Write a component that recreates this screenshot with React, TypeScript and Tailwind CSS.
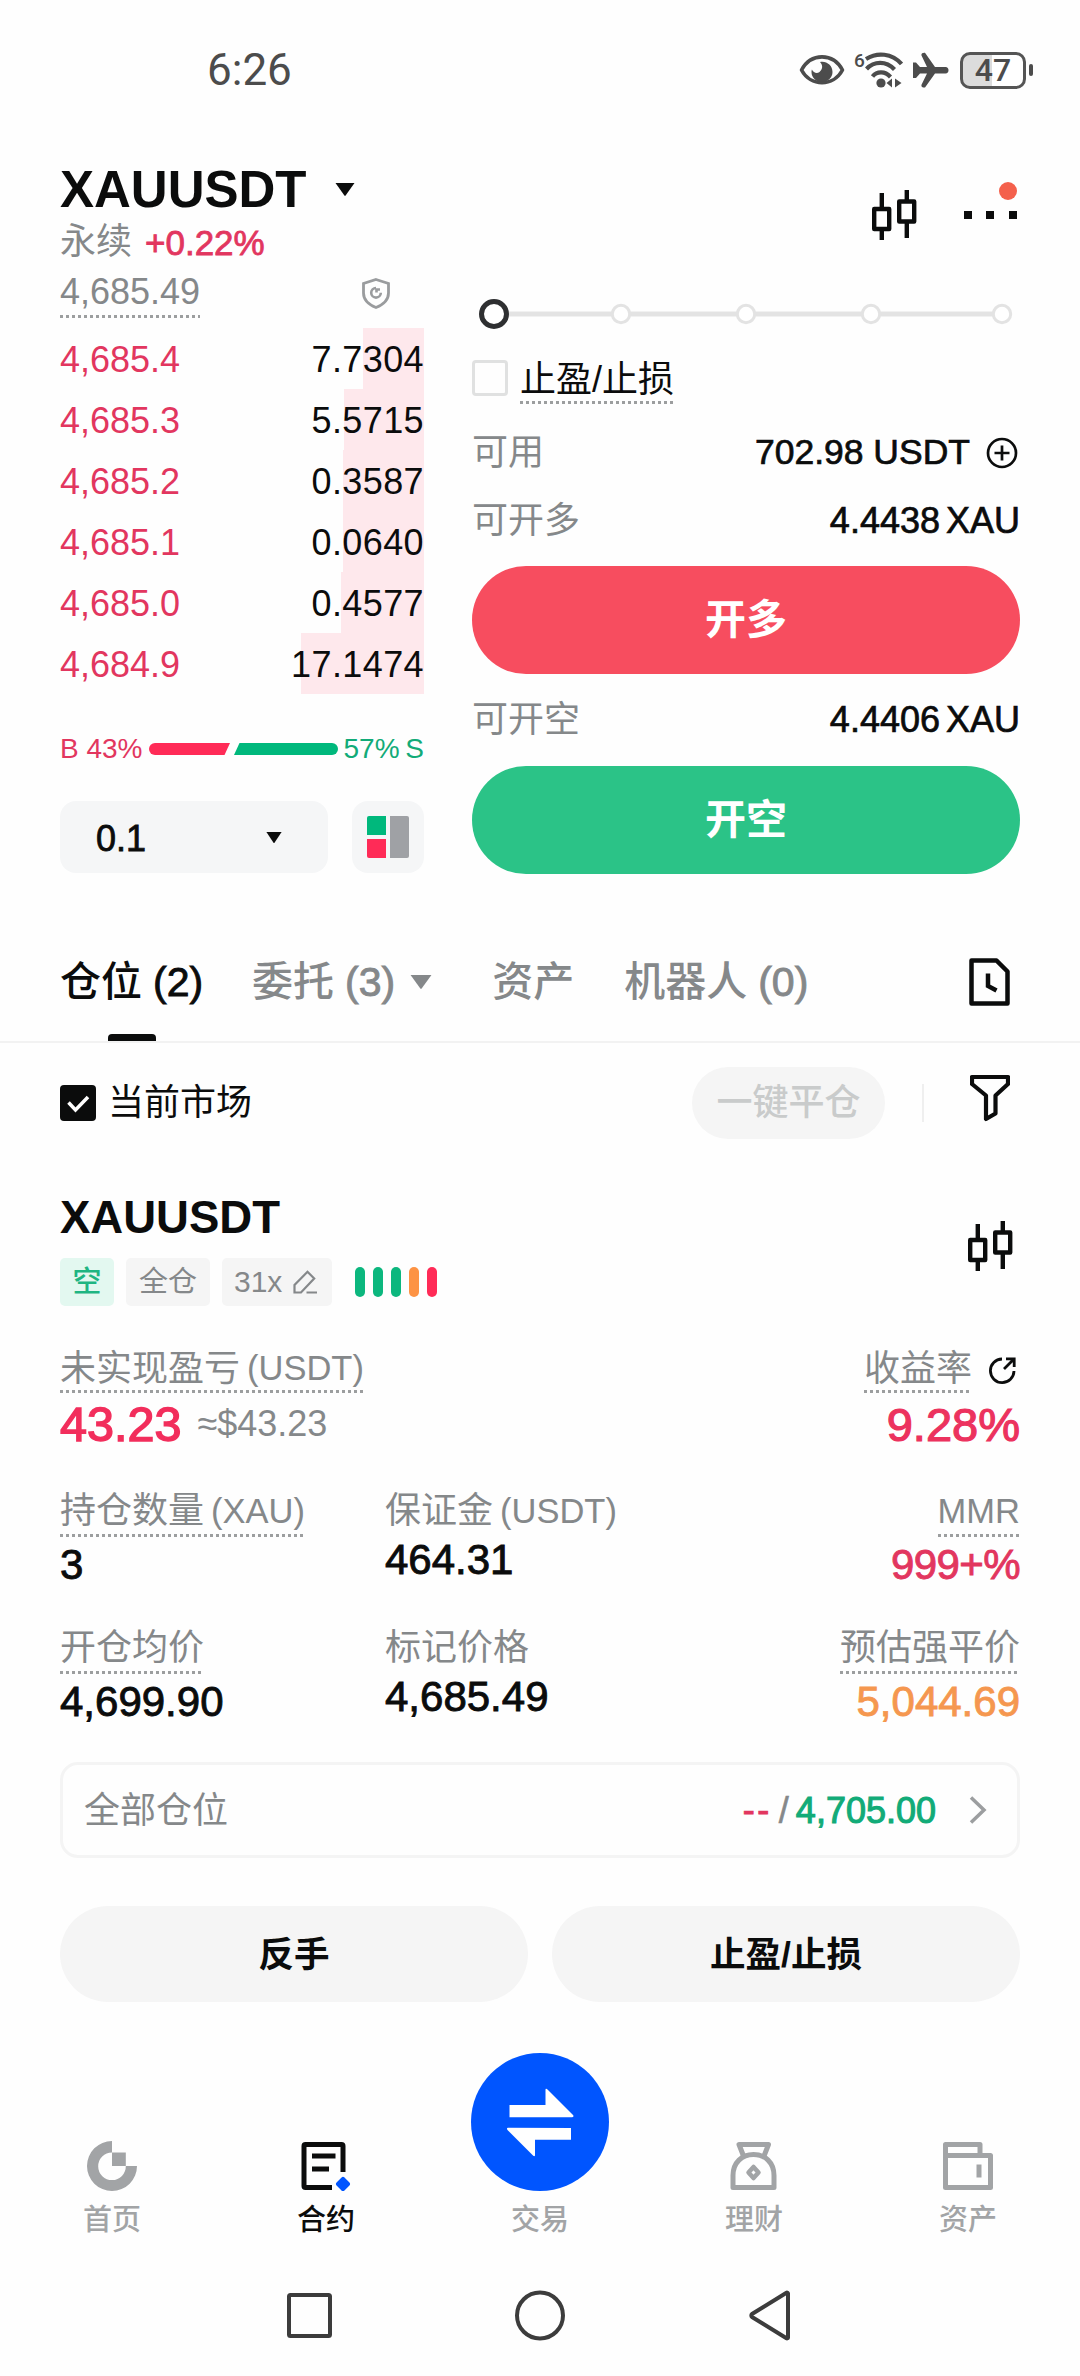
import type { ReactNode } from "react";

const asks = [
  { price: "4,685.4", size: "7.7304", depth: 61 },
  { price: "4,685.3", size: "5.5715", depth: 80 },
  { price: "4,685.2", size: "0.3587", depth: 81 },
  { price: "4,685.1", size: "0.0640", depth: 81 },
  { price: "4,685.0", size: "0.4577", depth: 83 },
  { price: "4,684.9", size: "17.1474", depth: 123 },
];

function Dotted({ children, gap = "h-[46px]" }: { children: ReactNode; gap?: string }) {
  return (
    <span className="inline-flex flex-col">
      <span className={`flex items-center pt-[2px] whitespace-nowrap ${gap}`}>{children}</span>
      <span className="h-[3px] bg-[repeating-linear-gradient(90deg,#9c9e9f_0_3px,transparent_3px_6px)]" />
    </span>
  );
}

function Caret({ className }: { className: string }) {
  return (
    <svg viewBox="0 0 20 13" preserveAspectRatio="none" className={className}>
      <path d="M0.5 0h19L10.6 12.6a0.8 0.8 0 0 1-1.2 0z" fill="currentColor" />
    </svg>
  );
}

function CandleIcon() {
  return (
    <svg width="45" height="50" viewBox="0 0 45 50" fill="none" stroke="#0b0c0c" strokeWidth="4.400" strokeLinejoin="round">
      <rect x="2.200" y="19" width="15" height="20" />
      <path d="M9.800 3v16M9.800 39v11M34.800 0v11M34.800 32v16" />
      <rect x="27.200" y="11.500" width="15" height="20" />
    </svg>
  );
}

function StatusBar() {
  return (
    <div className="flex h-[140px] items-center justify-between pr-[47px] pl-[207px] text-[#4c4c4c]">
      <span className="font-[Roboto] text-[44px] leading-none">6:26</span>
      <div className="flex items-center">
        <svg width="46" height="32" viewBox="0 0 46 32" className="mr-[9px]">
          <path d="M2.500 16C12 -1.500 34 -1.500 43.500 16C34.500 33 11.500 33 2.500 16z" fill="none" stroke="#4c4c4c" strokeWidth="3.600" strokeLinejoin="round" />
          <path d="M21 8c6-1.500 12.500 3 12.500 10 0 6-5 10-10.500 10s-10.500-4-10.500-10c0-.9.1-1.700.4-2.500C14.500 19 18 20 20.500 18 24 15 24 11 21 8z" fill="#4c4c4c" />
        </svg>
        <div className="flex">
          <span className="w-[11px] font-[Roboto] text-[19px] leading-[18px] font-medium">6</span>
          <svg width="38" height="36" viewBox="0 0 38 36" fill="none" stroke="#4c4c4c" strokeWidth="4.200">
            <path d="M1 7C12 0 27 1 36.500 12" />
            <path d="M1.500 17C9 9 21 8.500 29.500 17.500M7.500 24.500C12 19 20 19 25.500 25" />
            <circle cx="16" cy="31" r="4.600" fill="#4c4c4c" stroke="none" />
            <path d="M21.500 31l5.500-4.500v9zM36.500 31L30 26.500v9z" fill="#4c4c4c" stroke="none" />
          </svg>
        </div>
        <svg width="36" height="36" viewBox="0 0 36 36" className="ml-[10px]">
          <path d="M0 10.500h3l4 4.500h7L8.500 3.500C8 1.500 9.500.5 12 .8L22 15h10.500c4 0 4 6.400 0 6.400H22L12 35.500c-2.500.3-4-.8-3.500-2.800L14 21.400H7L3 26H0z" fill="#4c4c4c" />
        </svg>
        <div className="ml-[11px] flex h-[37px] w-[66px] items-center justify-center rounded-[10px] border-[3px] border-[#555] bg-[linear-gradient(90deg,#dcdcdc_0_49%,#fff_49%)]">
          <span className="font-[Roboto] text-[32px] leading-none font-medium">47</span>
        </div>
        <div className="ml-[3px] h-[12px] w-[4px] rounded-sm bg-[#4c4c4c]" />
      </div>
    </div>
  );
}

function OrderBook() {
  return (
    <div className="w-[364px] pt-6">
      <div className="flex h-[50px] items-center">
        <span className="text-[51px] font-bold">XAUUSDT</span>
        <Caret className="ml-7 h-[13px] w-[20px]" />
      </div>
      <div className="mt-1 flex h-12 items-center gap-[13px] text-[36px]">
        <span className="text-[#85888a]">永续</span>
        <span className="text-[35px] text-[#e2365f] [-webkit-text-stroke:0.8px]">+0.22%</span>
      </div>
      <div className="flex h-[52px] justify-between text-[36px] text-[#85888a]">
        <Dotted gap="h-[49px]">4,685.49</Dotted>
        <svg width="28" height="31" viewBox="0 0 28 31" fill="none" stroke="#9a9c9e" strokeWidth="2.800" className="mt-3 mr-[34px]">
          <path d="M14 1.500L26.500 5.500V15c0 7-5 11.500-12.500 14.500C6.500 26.500 1.500 22 1.500 15V5.500z" />
          <path d="M14 10a4.800 4.800 0 1 0 4.800 4.800M14.500 14.500V11.500h3.500" strokeWidth="2.600" />
        </svg>
      </div>
      <div className="mt-[10px]">
        {asks.map((ask) => (
          <div key={ask.price} className="relative flex h-[61px] items-center justify-between pt-[3px] text-[36px]">
            <div className="absolute top-0 right-0 h-full bg-[#fee8ec]" style={{ width: ask.depth }} />
            <span className="text-[#e2365f]">{ask.price}</span>
            <span className="relative tracking-[0.4px] text-[#0b0c0c]">{ask.size}</span>
          </div>
        ))}
      </div>
      <div className="mt-[31px] flex h-12 items-center justify-between text-[28px]">
        <span className="text-[#e2365f]">B 43%</span>
        <svg width="189" height="12" viewBox="0 0 189 12">
          <path d="M6 0h75l-5.500 12H6A6 6 0 0 1 6 0z" fill="#ff2b57" />
          <path d="M90.500 0H183a6 6 0 0 1 0 12H85z" fill="#00b87c" />
        </svg>
        <span className="text-[#12ab78] [word-spacing:-2px]">57% S</span>
      </div>
      <div className="mt-7 flex h-[72px] justify-between">
        <div className="flex w-[268px] items-center justify-between rounded-[16px] bg-[#f5f6f7] pr-[46px] pl-9 text-[36px] [-webkit-text-stroke:0.8px]">
          <span className="pt-[3px]">0.1</span>
          <Caret className="h-[11px] w-[16px]" />
        </div>
        <div className="flex w-[72px] items-center justify-center rounded-[16px] bg-[#f5f6f7]">
          <svg width="42" height="42" viewBox="0 0 42 42">
            <path d="M2 0h17v19H0V2a2 2 0 0 1 2-2z" fill="#00b87c" />
            <path d="M0 23h19v19H2a2 2 0 0 1-2-2z" fill="#ff2b57" />
            <path d="M23 0h17a2 2 0 0 1 2 2v38a2 2 0 0 1-2 2H23z" fill="#9fa1a5" />
          </svg>
        </div>
      </div>
    </div>
  );
}

function AmountRow({ label, value, children }: { label: string; value: ReactNode; children?: ReactNode }) {
  return (
    <div className="flex h-12 items-center justify-between pt-[2px] text-[36px] text-[#85888a]">
      {label}
      <span className="flex items-center text-[36px] text-[#0b0c0c] [-webkit-text-stroke:0.7px]">
        {value}
        {children}
      </span>
    </div>
  );
}

function OrderForm() {
  return (
    <div className="w-[548px] pt-[42px]">
      <div className="flex h-[60px] justify-end">
        <div className="mt-2">
          <CandleIcon />
        </div>
        <svg width="56" height="40" viewBox="0 0 56 40" className="mr-[3px] ml-[44px]">
          <path d="M3 29h8v8H3zM25 29h8v8h-8zM48 29h8v8h-8z" fill="#0b0c0c" />
          <circle cx="47" cy="9" r="9" fill="#f4604c" />
        </svg>
      </div>
      <svg width="548" height="32" viewBox="0 0 548 32" className="mt-14 block">
        <path d="M37 16h485" stroke="#e3e3e3" strokeWidth="5" />
        <circle cx="22" cy="16" r="12.500" fill="#fff" stroke="#2e2f31" strokeWidth="5" />
        {[149, 274, 399, 530].map((cx) => (
          <circle key={cx} cx={cx} cy="16" r="8.700" fill="#fff" stroke="#e3e3e3" strokeWidth="3" />
        ))}
      </svg>
      <div className="mt-[26px] flex h-12 items-start gap-3 text-[36px]">
        <div className="mt-1 size-9 rounded-[4px] border-[3px] border-[#e0e1e1]" />
        <Dotted gap="h-[45px]">止盈/止损</Dotted>
      </div>
      <div className="mt-6">
        <AmountRow label="可用" value={<span className="text-[35.500px]">702.98 USDT</span>}>
          <svg width="32" height="32" viewBox="0 0 32 32" fill="none" stroke="#0b0c0c" strokeWidth="2.700" className="mr-[2px] ml-4">
            <circle cx="16" cy="16" r="14" />
            <path d="M16 8.500v15M8.500 16h15" />
          </svg>
        </AmountRow>
      </div>
      <div className="mt-5">
        <AmountRow label="可开多" value={<span className="[word-spacing:-4px]">4.4438 XAU</span>} />
      </div>
      <button className="mt-[22px] h-[108px] w-full rounded-full bg-[#f74d5f] text-[41px] font-bold text-white">开多</button>
      <div className="mt-[21px]">
        <AmountRow label="可开空" value={<span className="[word-spacing:-4px]">4.4406 XAU</span>} />
      </div>
      <button className="mt-[23px] h-[108px] w-full rounded-full bg-[#2bc387] text-[41px] font-bold text-white">开空</button>
    </div>
  );
}

function Tabs() {
  return (
    <div className="mt-[67px] flex h-[102px] border-b-2 border-[#f2f2f2] px-[60px] text-[41px] font-medium whitespace-nowrap text-[#85888a]">
      <div className="flex flex-col items-center text-[#0b0c0c]">
        <span className="flex h-[82px] items-center gap-[11px]">
          仓位 <span className="[-webkit-text-stroke:0.9px]">(2)</span>
        </span>
        <span className="mt-[11px] h-[7px] w-12 rounded-t-[4px] bg-[#0b0c0c]" />
      </div>
      <div className="ml-[49px] flex h-[82px] items-center gap-[11px]">
        委托 <span className="[-webkit-text-stroke:0.9px]">(3)</span>
        <Caret className="ml-1 h-[14px] w-[22px]" />
      </div>
      <span className="ml-[60px] flex h-[82px] items-center">资产</span>
      <span className="ml-[50px] flex h-[82px] items-center gap-[11px]">
        机器人 <span className="[-webkit-text-stroke:0.9px]">(0)</span>
      </span>
      <svg width="41" height="48" viewBox="0 0 41 48" fill="none" stroke="#0b0c0c" strokeWidth="4.500" className="mt-[17px] mr-[10px] ml-auto">
        <path d="M2.500 2.500h25L38.500 13.500v32h-36z" strokeLinejoin="round" />
        <path d="M19 15.500v12.500l8.500 4.500" />
      </svg>
    </div>
  );
}

function FilterRow() {
  return (
    <div className="mt-6 flex h-[72px] items-center px-[60px] text-[36px]">
      <svg width="36" height="36" viewBox="0 0 36 36">
        <rect width="36" height="36" rx="4" fill="#0b0c0c" />
        <path d="M8.500 17.500l7 7.500L28 12" fill="none" stroke="#fff" strokeWidth="3.500" />
      </svg>
      <span className="ml-[12px]">当前市场</span>
      <div className="ml-auto flex h-[72px] w-[193px] items-center justify-center rounded-full bg-[#f5f5f5] font-medium text-[#c9cbcb]">
        一键平仓
      </div>
      <div className="ml-[37px] h-[38px] w-[2px] bg-[#efefef]" />
      <svg width="40" height="48" viewBox="0 0 40 48" fill="none" stroke="#0b0c0c" strokeWidth="4.200" strokeLinejoin="round" className="mr-[10px] mb-[10px] ml-[46px]">
        <path d="M2 3h36v7L25.500 21.500V39.500L16 45V21.500L2 10z" />
      </svg>
    </div>
  );
}

function Label({ text, unit }: { text?: string; unit?: string }) {
  return (
    <span className="flex items-center gap-[7px] whitespace-nowrap">
      {text}
      {unit && <span className="text-[34.500px]">{unit}</span>}
    </span>
  );
}

function Stat({
  label,
  unit,
  value,
  plain,
  right,
  tone = "text-[#0b0c0c]",
}: {
  label?: string;
  unit?: string;
  value: string;
  plain?: boolean;
  right?: boolean;
  tone?: string;
}) {
  const text = <Label text={label} unit={unit} />;
  return (
    <div className={`flex flex-col text-[36px] text-[#85888a] ${right ? "items-end" : "items-start"}`}>
      {plain ? <span className="flex h-[46px] items-center pt-1">{text}</span> : <Dotted gap="h-[48px]">{text}</Dotted>}
      <span className={`mt-[3px] flex h-[50px] items-center text-[42px] [-webkit-text-stroke:0.9px] ${tone}`}>{value}</span>
    </div>
  );
}

function Position() {
  return (
    <div className="mt-[53px] px-[60px]">
      <div className="flex h-[114px] justify-between">
        <div>
          <div className="flex h-[50px] items-center pt-[2px] text-[45.500px] font-bold">XAUUSDT</div>
          <div className="mt-4 flex h-12 items-center gap-3 text-[29px] text-[#85888a]">
            <span className="flex h-12 w-[54px] items-center justify-center rounded-[5px] bg-[#e3f8f0] font-medium text-[#1fb582]">空</span>
            <span className="flex h-12 w-[84px] items-center justify-center rounded-[5px] bg-[#f5f5f5]">全仓</span>
            <span className="flex h-12 w-[110px] items-center rounded-[5px] bg-[#f5f5f5] pl-3">
              <span className="w-[49px] text-[30px]">31x</span>
              <svg width="24" height="24" viewBox="0 0 24 24" fill="none" stroke="#85888a" strokeWidth="2.200" className="ml-[10px]">
                <path d="M1.500 22.500v-7.500L14.500 1.800l6.700 6.700L8 22.500zM13.500 22.500H24" />
              </svg>
            </span>
            <div className="ml-[11px] flex gap-2">
              <span className="h-[30px] w-[10px] rounded-full bg-[#0cb77e]" />
              <span className="h-[30px] w-[10px] rounded-full bg-[#0cb77e]" />
              <span className="h-[30px] w-[10px] rounded-full bg-[#0cb77e]" />
              <span className="h-[30px] w-[10px] rounded-full bg-[#fd9344]" />
              <span className="h-[30px] w-[10px] rounded-full bg-[#ff2b57]" />
            </div>
          </div>
        </div>
        <div className="mt-[29px] mr-[7px]">
          <CandleIcon />
        </div>
      </div>

      <div className="mt-[39px] flex justify-between text-[36px] text-[#85888a]">
        <div>
          <Dotted gap="h-[45px]">
            <Label text="未实现盈亏" unit="(USDT)" />
          </Dotted>
          <div className="mt-[6px] flex h-[50px] items-center gap-4">
            <span className="text-[48.500px] text-[#f22e5c] [-webkit-text-stroke:1.500px]">43.23</span>
            <span className="text-[36px]">≈$43.23</span>
          </div>
        </div>
        <div className="flex flex-col items-end">
          <div className="flex items-start">
            <Dotted gap="h-[45px]">收益率</Dotted>
            <svg width="27" height="27" viewBox="0 0 27 27" fill="none" stroke="#0b0c0c" strokeWidth="2.800" className="mt-[12px] mr-[4px] ml-[17px]">
              <path d="M13 2a11.800 11.800 0 1 0 12 12M15 12L25 2M17 1.800h8.200V10" />
            </svg>
          </div>
          <span className="mt-[6px] flex h-[50px] items-center text-[47px] text-[#ec325e] [-webkit-text-stroke:1.200px]">9.28%</span>
        </div>
      </div>

      <div className="mt-[37px] grid h-[137px] grid-cols-[325px_1fr_1fr]">
        <Stat label="持仓数量" unit="(XAU)" value="3" />
        <Stat label="保证金" unit="(USDT)" value="464.31" plain />
        <Stat unit="MMR" value="999+%" right tone="text-[#e2365f] tracking-[-0.6px]" />
      </div>
      <div className="grid h-[139px] grid-cols-[325px_1fr_1fr]">
        <Stat label="开仓均价" value="4,699.90" />
        <Stat label="标记价格" value="4,685.49" plain />
        <Stat label="预估强平价" value="5,044.69" right tone="text-[#f5974f]" />
      </div>

      <div className="flex h-[96px] items-center rounded-[18px] border-[3px] border-[#f4f4f4] pl-[21px] text-[36px] text-[#85888a]">
        <span className="pt-[2px]">全部仓位</span>
        <span className="ml-auto tracking-[2.500px] text-[#e2365f] [-webkit-text-stroke:0.9px]">--</span>
        <span className="mx-[7px] pt-[2px] [-webkit-text-stroke:0.6px]">/</span>
        <span className="pt-[2px] text-[#12ab78] [-webkit-text-stroke:1.100px]">4,705.00</span>
        <svg width="18" height="28" viewBox="0 0 18 28" fill="none" stroke="#9c9ea0" strokeWidth="3.500" className="mr-[30px] ml-[33px]">
          <path d="M2 1.500L15 14L2 26.500" />
        </svg>
      </div>
      <div className="mt-12 grid h-[96px] grid-cols-2 gap-6 text-[35.500px] font-bold">
        <button className="rounded-full bg-[#f5f5f5] pt-[3px]">反手</button>
        <button className="rounded-full bg-[#f5f5f5] pt-[3px]">止盈/止损</button>
      </div>
    </div>
  );
}

function NavItem({ label, active, children }: { label: string; active?: boolean; children: ReactNode }) {
  return (
    <div className={`flex flex-col items-center justify-end ${active ? "text-[#0b0c0c]" : "text-[#a2a4a6]"}`}>
      {children}
      <span className="mt-[8px] flex h-10 items-center pt-[2px] text-[29px] font-medium">{label}</span>
    </div>
  );
}

function BottomNav() {
  return (
    <div className="mt-[51px] grid h-[186px] grid-cols-[214px_214px_214px_214px_214px] pl-[5px]">
      <NavItem label="首页">
        <svg width="50" height="50" viewBox="0 0 50 50" fill="#a2a4a6">
          <path d="M25 0v11.500A13.800 13.800 0 1 0 38.800 25H50A25 25 0 1 1 25 0z" />
          <path d="M25 11.500h13.800V25H25z" />
        </svg>
      </NavItem>
      <NavItem label="合约" active>
        <svg width="50" height="50" viewBox="0 0 50 50" fill="none" stroke="#0b0c0c" strokeWidth="5">
          <path d="M42 31V5a1.500 1.500 0 0 0-1.500-1.500h-36A1.500 1.500 0 0 0 3 5v40a1.500 1.500 0 0 0 1.500 1.500H31" />
          <path d="M11 15h23.500M11 28h17" />
          <path d="M42 37.800l5 5.200-5 5.200-5-5.200z" fill="#0055ff" stroke="#0055ff" strokeWidth="4" strokeLinejoin="round" />
        </svg>
      </NavItem>
      <NavItem label="交易">
        <svg width="138" height="138" viewBox="0 0 138 138" className="shrink-0">
          <circle cx="69" cy="69" r="69" fill="#0055ff" />
          <path d="M38.500 52H74.500V37c0-1.500 1-1.500 2-.5L102 62c1 1.200.5 2.200-1 2.200H38.500z" fill="#fff" />
          <path d="M100 75v11.800H64V102c0 1.500-1 1.500-2 .5L36.500 77c-1-1.200-.5-2.200 1-2.200z" fill="#fff" />
        </svg>
      </NavItem>
      <NavItem label="理财">
        <svg width="50" height="50" viewBox="0 0 50 50" fill="none" stroke="#a2a4a6" strokeWidth="5" strokeLinejoin="round">
          <path d="M14.500 15L10 3.500h29.500L35 15" />
          <path d="M4 46.500V34.500C4 21.500 13 13.500 24.500 13.500s20.500 8 20.500 21v12z" />
          <path d="M24.500 26l5 5.500-5 5.500-5-5.500z" strokeWidth="4.500" />
        </svg>
      </NavItem>
      <NavItem label="资产">
        <svg width="50" height="50" viewBox="0 0 50 50" fill="none" stroke="#a2a4a6" strokeWidth="5" strokeLinejoin="round">
          <path d="M2.500 14.500v-11H37v11M2.500 14.500h45v32h-45z" />
          <path d="M36 23.500v13" />
        </svg>
      </NavItem>
    </div>
  );
}

function SystemNav() {
  return (
    <div className="mt-[51px] flex h-[52px] items-center pl-[287px]">
      <svg width="504" height="52" viewBox="0 0 504 52" fill="none" stroke="#3c3c3c" strokeWidth="4" strokeLinejoin="round">
        <rect x="2" y="5" width="41" height="41" rx="1.500" />
        <circle cx="253" cy="25.500" r="23" />
        <path d="M501 3.500v44a1 1 0 0 1-1.500.8L465 27a2 2 0 0 1 0-3L499.500 2.700a1 1 0 0 1 1.500.8z" />
      </svg>
    </div>
  );
}

export default function App() {
  return (
    <div className="h-[2376px] w-[1080px] overflow-hidden bg-[#fefefe] font-['Liberation_Sans','Noto_Sans_CJK_SC',sans-serif] leading-none text-[#0b0c0c]">
      <StatusBar />
      <div className="flex justify-between px-[60px]">
        <OrderBook />
        <OrderForm />
      </div>
      <Tabs />
      <FilterRow />
      <Position />
      <BottomNav />
      <SystemNav />
    </div>
  );
}
